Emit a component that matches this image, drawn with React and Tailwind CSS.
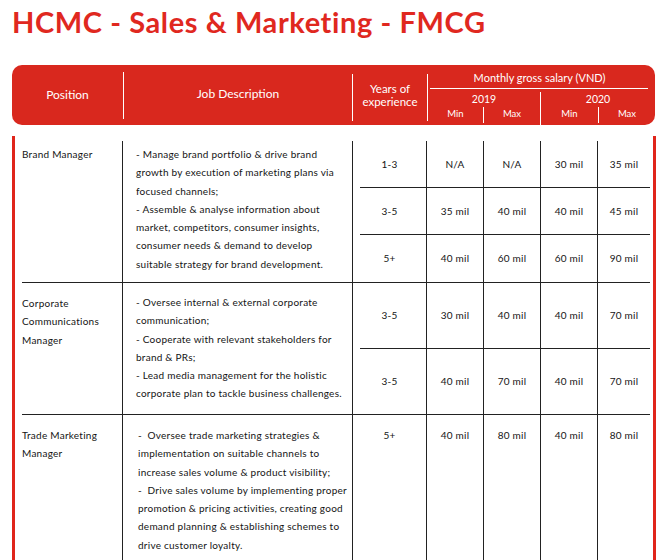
import React from "react";

const groups = [
  {
    pos: ["Brand Manager"],
    posPt: "pt-[4px]",
    jobPt: "pt-[4px]",
    jobPl: "pl-[13px]",
    job: [
      "- Manage brand portfolio & drive brand",
      "growth by execution of marketing plans via",
      "focused channels;",
      "- Assemble & analyse information about",
      "market, competitors, consumer insights,",
      "consumer needs & demand to develop",
      "suitable strategy for brand development.",
    ],
    rows: [
      { h: "h-[46px]", v: ["1-3", "N/A", "N/A", "30 mil", "35 mil"] },
      { h: "h-[46px]", v: ["3-5", "35 mil", "40 mil", "40 mil", "45 mil"] },
      { h: "h-[47px]", v: ["5+", "40 mil", "60 mil", "60 mil", "90 mil"] },
    ],
  },
  {
    pos: ["Corporate", "Communications", "Manager"],
    posPt: "pt-[11px]",
    jobPt: "pt-[10px]",
    jobPl: "pl-[13px]",
    job: [
      "- Oversee internal & external corporate",
      "communication;",
      "- Cooperate with relevant stakeholders for",
      "brand & PRs;",
      "- Lead media management for the holistic",
      "corporate plan to tackle business challenges.",
    ],
    rows: [
      { h: "h-[65px]", v: ["3-5", "30 mil", "40 mil", "40 mil", "70 mil"] },
      { h: "h-[65px]", v: ["3-5", "40 mil", "70 mil", "40 mil", "70 mil"] },
    ],
  },
  {
    pos: ["Trade Marketing", "Manager"],
    posPt: "pt-[11px]",
    jobPt: "pt-[11px]",
    jobPl: "pl-[15px]",
    job: [
      "-  Oversee trade marketing strategies &",
      "implementation on suitable channels to",
      "increase sales volume & product visibility;",
      "-  Drive sales volume by implementing proper",
      "promotion & pricing activities, creating good",
      "demand planning & establishing schemes to",
      "drive customer loyalty.",
    ],
    rows: [
      { h: "h-[200px]", top: true, v: ["5+", "40 mil", "80 mil", "40 mil", "80 mil"] },
    ],
  },
];

const colW = ["w-[73px]", "w-[57px] border-l", "w-[57px] border-l", "w-[57px] border-l", "w-[53px] border-l"];

function Row({ row }) {
  return (
    <div className={`flex ${row.h}`}>
      {row.v.map((t, i) => (
        <div
          key={i}
          className={`${colW[i]} border-[#222] flex justify-center ${
            row.top ? "items-start pt-[11px]" : "items-center"
          } leading-[18.3px]`}
        >
          {t}
        </div>
      ))}
    </div>
  );
}

export default function App() {
  return (
    <div
      className="w-[669px] h-[560px] overflow-hidden bg-white"
      style={{ fontFamily: "Lato, 'Noto Sans', sans-serif" }}
    >
      <div className="pt-[4px] pl-[12px]">
        <h1 className="text-[29px] leading-[35px] font-bold text-[#e0281f] whitespace-nowrap tracking-[0.6px]">
          HCMC - Sales &amp; Marketing - FMCG
        </h1>
      </div>

      {/* Header */}
      <div className="mt-[26px] ml-[12px] w-[643px] h-[60px] rounded-[10px] bg-[#d9281e] flex text-white">
        <div className="w-[111px] flex items-center justify-center text-[12px]">Position</div>
        <div className="w-px bg-white mt-[7px] mb-[6px]" />
        <div className="w-[228px] flex items-center justify-center text-[12px] pb-[2px]">Job Description</div>
        <div className="w-px bg-white mt-[9px] mb-[4px]" />
        <div className="w-[74px] flex flex-col items-center justify-center text-[11.5px] leading-[13px]">
          <span>Years of</span>
          <span>experience</span>
        </div>
        <div className="w-px bg-white mt-[9px] mb-[4px]" />
        <div className="w-[227px] flex flex-col">
          <div className="h-[23px] pt-[6px] text-[11px] leading-[13px] text-center pr-[4px]">
            Monthly gross salary (VND)
          </div>
          <div className="h-px bg-white ml-[2px] mr-[7px]" />
          <div className="flex flex-1">
            <div className="w-[112px] flex flex-col">
              <div className="pt-[4px] text-[10.5px] leading-[12px] text-center">2019</div>
              <div className="flex flex-1 text-[9.5px] leading-[12px]">
                <div className="w-[55px] text-center pt-[3px]">Min</div>
                <div className="w-px bg-white mt-[2px] mb-[2px]" />
                <div className="w-[56px] text-center pt-[3px]">Max</div>
              </div>
            </div>
            <div className="w-px bg-white mt-[3px]" />
            <div className="w-[114px] flex flex-col">
              <div className="pt-[4px] text-[10.5px] leading-[12px] text-center">2020</div>
              <div className="flex flex-1 text-[9.5px] leading-[12px]">
                <div className="w-[57px] text-center pt-[3px]">Min</div>
                <div className="w-px bg-white mt-[2px] mb-[2px]" />
                <div className="w-[56px] text-center pt-[3px]">Max</div>
              </div>
            </div>
          </div>
        </div>
      </div>

      {/* Body */}
      <div className="mt-[11px] ml-[12px] w-[644px] border-x-[3px] border-[#e0251b] pt-[5px] h-[600px]">
        <div className="ml-[7px] w-[628px] text-[10px] text-[#141414] tracking-[0.25px]">
          {groups.map((g, gi) => (
            <div key={gi} className="flex border-b border-[#222]">
              <div className={`w-[100px] ${g.posPt} leading-[18.3px]`}>
                {g.pos.map((p, i) => (
                  <div key={i} className="whitespace-nowrap">{p}</div>
                ))}
              </div>
              <div className={`w-[230px] border-l border-[#222] ${g.jobPl} ${g.jobPt} leading-[18.3px]`}>
                {g.job.map((l, i) => (
                  <div key={i} className="whitespace-pre">{l}</div>
                ))}
              </div>
              <div className="w-[298px] border-l border-[#222] flex flex-col">
                {g.rows.map((r, ri) => (
                  <React.Fragment key={ri}>
                    {ri > 0 && <div className="h-px bg-[#222] ml-[7px]" />}
                    <Row row={r} />
                  </React.Fragment>
                ))}
              </div>
            </div>
          ))}
        </div>
      </div>
    </div>
  );
}
